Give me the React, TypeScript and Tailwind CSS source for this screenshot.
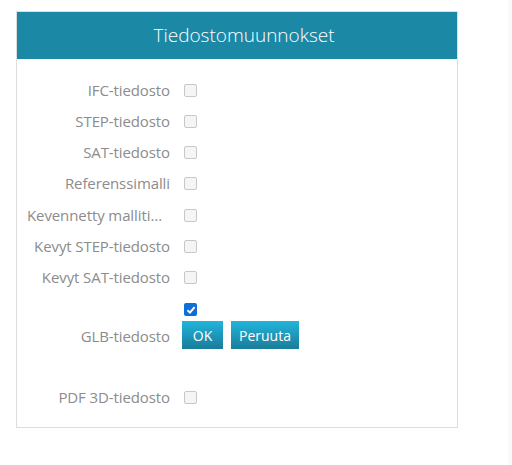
import React, { useState } from 'react';

const FONT = { fontFamily: '"Open Sans", "Noto Sans", sans-serif' };

const formats = [
  { id: 'ifc', label: 'IFC-tiedosto' },
  { id: 'step', label: 'STEP-tiedosto' },
  { id: 'sat', label: 'SAT-tiedosto' },
  { id: 'ref', label: 'Referenssimalli' },
  { id: 'light', label: 'Kevennetty mallitiedosto' },
  { id: 'lstep', label: 'Kevyt STEP-tiedosto' },
  { id: 'lsat', label: 'Kevyt SAT-tiedosto' },
];

const Box: React.FC<{ checked?: boolean; onClick?: () => void }> = ({ checked, onClick }) =>
  checked ? (
    <span
      onClick={onClick}
      className="flex h-[13px] w-[13px] items-center justify-center rounded-[2px] bg-[#0f6fd6]"
    >
      <svg width="10" height="10" viewBox="0 0 10 10">
        <path d="M1.5 5.2 L4 7.6 L8.6 2.2" fill="none" stroke="#fff" strokeWidth="2" />
      </svg>
    </span>
  ) : (
    <span
      onClick={onClick}
      className="block h-[13px] w-[13px] rounded-[2px] border border-[#c8c8c8] bg-[#f5f5f5]"
    />
  );

const Label: React.FC<{ children: React.ReactNode }> = ({ children }) => (
  <span className="truncate text-right text-[15px] tracking-[-0.1px] text-[#8c8c8c]">{children}</span>
);

export default function App() {
  const [glb, setGlb] = useState(true);

  return (
    <div className="flex min-h-[465px] bg-white" style={FONT}>
      <div className="flex-1 pl-[16px] pt-[11px]">
        <div className="w-[442px] border border-[#dddddd] bg-white">
          {/* Header */}
          <div className="flex h-[47px] items-center justify-center bg-[#1b88a6] pl-[14px]">
            <h2 className="text-[19px] font-light text-white">Tiedostomuunnokset</h2>
          </div>

          {/* Rows */}
          <div className="grid grid-cols-[143px_auto] gap-x-[14px] px-[10px] pt-[16px] pb-[14px]">
            {formats.map((f, i) => (
              <React.Fragment key={f.id}>
                <div
                  className={`flex items-center justify-end overflow-hidden ${i === 4 ? 'h-[32px]' : 'h-[31px]'}`}
                >
                  <Label>{f.label}</Label>
                </div>
                <div className={`flex items-center ${i === 4 ? 'h-[32px]' : 'h-[31px]'}`}>
                  <Box />
                </div>
              </React.Fragment>
            ))}

            {/* GLB with confirm */}
            <div />
            <div className="flex h-[28px] items-end pb-[5px]">
              <Box checked={glb} onClick={() => setGlb(!glb)} />
            </div>
            <div className="flex h-[28px] items-center justify-end pt-[3px]">
              <Label>GLB-tiedosto</Label>
            </div>
            <div className="flex h-[28px] items-center gap-[8px] -ml-[2px]">
              <button className="h-[28px] w-[41px] bg-gradient-to-b from-[#22b5dc] to-[#1a7c9a] text-[14px] text-white">
                OK
              </button>
              <button className="h-[28px] w-[68px] bg-gradient-to-b from-[#22b5dc] to-[#1a7c9a] text-[14px] text-white">
                Peruuta
              </button>
            </div>
            <div className="col-span-2 h-[33px]" />

            <div className="flex h-[31px] items-center justify-end">
              <Label>PDF 3D-tiedosto</Label>
            </div>
            <div className="flex h-[31px] items-center">
              <Box />
            </div>
          </div>
        </div>
      </div>
      <div className="w-[4px] bg-[#f9f9f9]" />
    </div>
  );
}
